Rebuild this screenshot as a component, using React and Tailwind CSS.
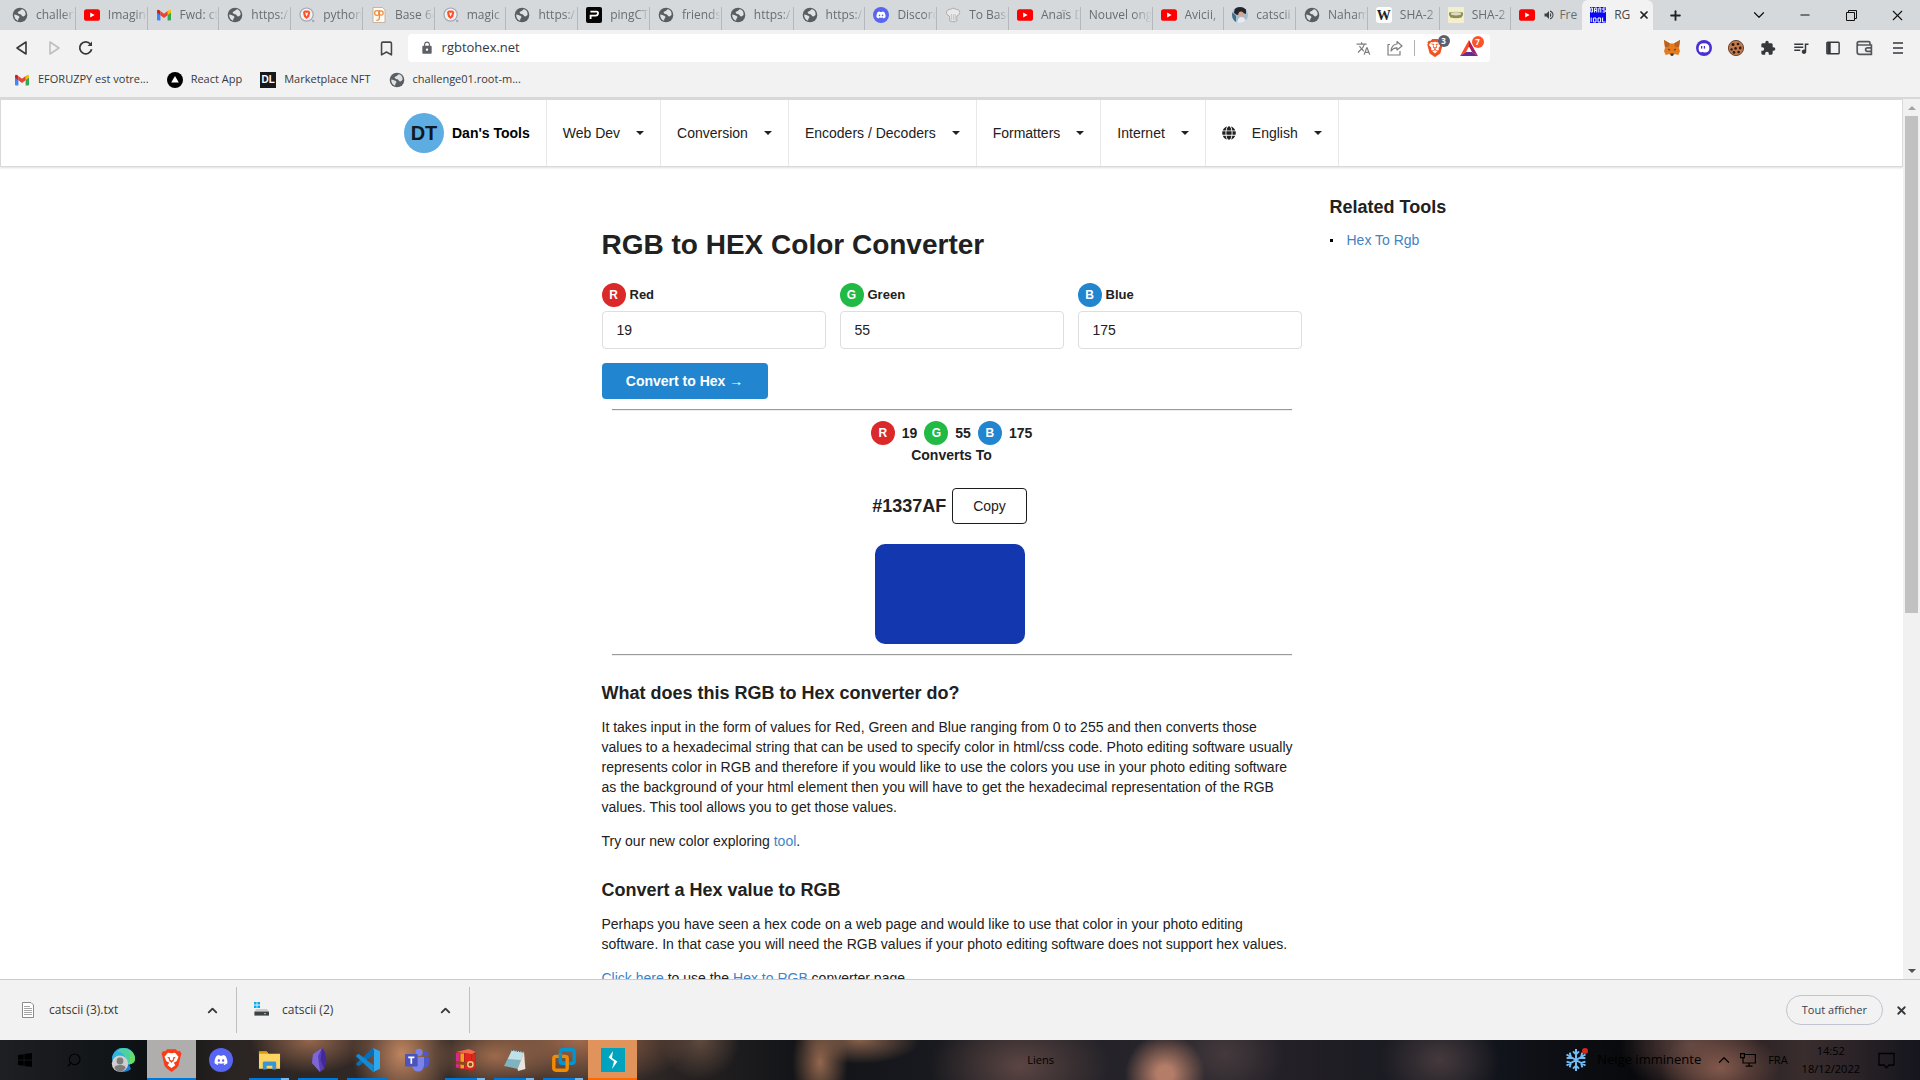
import React from "react";
import { FaDiscord, FaGlobe, FaWindows } from "react-icons/fa";
import { SiBrave } from "react-icons/si";
import { MdTranslate, MdExtension, MdLock, MdQueueMusic, MdVolumeUp } from "react-icons/md";
import { ChevronDown, ChevronUp, X, Plus, Minus, Bookmark, Search } from "lucide-react";

/* ---------- favicons ---------- */

function GlobeIcon() {
  return (
    <svg viewBox="0 0 16 16" className="size-4 shrink-0">
      <circle cx="8" cy="8" r="7.3" fill="#5a5e61" />
      <path d="M10.2 2.3 C8 3 8.6 4.2 6.6 4.6 C5 5 5.6 6.6 7 6.9 C9 7.2 9.4 7.6 10 8.8 C10.6 10 13 9.4 13.6 7.6 C13.8 5 12.4 3.2 10.2 2.3Z" fill="#dfe2e4" />
      <path d="M2.2 7.4 C4 7.4 5 8.2 6.4 8.8 C8 9.6 7.4 11 6.6 11.6 C6 12.2 6.4 13.2 6 13.7 C3.6 12.8 2 10.4 2.2 7.4Z" fill="#dfe2e4" />
    </svg>
  );
}

function YoutubeIcon() {
  return (
    <svg viewBox="0 0 16 16" className="size-4 shrink-0">
      <rect x="0" y="2.2" width="16" height="11.6" rx="2.6" fill="#f00" />
      <path d="M6.2 5.4 L10.6 8 L6.2 10.6Z" fill="#fff" />
    </svg>
  );
}

function GmailIcon() {
  return (
    <svg viewBox="0 0 16 16" className="size-4 shrink-0">
      <path d="M1 4 L4.4 6.4 V13.6 H2 A1 1 0 0 1 1 12.6Z" fill="#4285f4" />
      <path d="M15 4 L11.6 6.4 V13.6 H14 A1 1 0 0 0 15 12.6Z" fill="#34a853" />
      <path d="M11.6 4 L13 3 Q15 2.2 15 4.2 V5.6 L11.6 8.2Z" fill="#fbbc04" />
      <path d="M4.4 4 L3 3 Q1 2.2 1 4.2 V5.6 L4.4 8.2Z" fill="#c5221f" />
      <path d="M4.4 4 L8 6.7 L11.6 4 V8.2 L8 10.9 L4.4 8.2Z" fill="#ea4335" />
    </svg>
  );
}

function BraveSearchIcon() {
  return (
    <svg viewBox="0 0 16 16" className="size-4 shrink-0">
      <circle cx="7.6" cy="7.6" r="6.6" fill="#f1f1f3" stroke="#a3a6b4" strokeWidth="1.2" />
      <path d="M4.6 4.2 L5.8 3.4 H9.4 L10.6 4.2 L11.2 5.4 L10.2 9.8 L7.6 12 L5 9.8 L4 5.4Z" fill="#fb542b" />
      <path d="M6 5.4 L7.6 6 L9.2 5.4 L8.4 7.8 L7.6 9.4 L6.8 7.8Z" fill="#fff" />
      <circle cx="14.2" cy="14" r="1.2" fill="#a3a6b4" />
    </svg>
  );
}

function DcodeIcon() {
  return (
    <svg viewBox="0 0 16 16" className="size-4 shrink-0">
      <path d="M2 .5 H11.5 L14 3 V15.5 H2Z" fill="#fffaf2" stroke="#b9a894" strokeWidth=".8" />
      <circle cx="6" cy="6" r="2.4" fill="none" stroke="#f08a3c" strokeWidth="1.2" />
      <circle cx="10" cy="6" r="2.2" fill="none" stroke="#f08a3c" strokeWidth="1.2" />
      <path d="M8.4 3 V11 Q8 13.6 5.4 13.4" fill="none" stroke="#f08a3c" strokeWidth="1.3" />
    </svg>
  );
}

function PingIcon() {
  return (
    <svg viewBox="0 0 16 16" className="size-4 shrink-0">
      <rect width="16" height="16" rx="2" fill="#050505" />
      <path d="M4.4 4.6 H10.6 Q12.2 4.6 12 6.4 Q11.8 8.6 9.8 8.6 H4.6 V12" fill="none" stroke="#fff" strokeWidth="1.8" />
    </svg>
  );
}

function DiscordIcon() {
  return (
    <span className="flex size-4 shrink-0 items-center justify-center rounded-full bg-[#5865f2]">
      <FaDiscord className="size-[10px] text-white" />
    </span>
  );
}

function ChefIcon() {
  return (
    <svg viewBox="0 0 16 16" className="size-4 shrink-0">
      <path d="M4.4 9 Q1 8 1.4 5 Q2.4 2 5 2.4 Q8 0 11 2.2 Q14.6 2 14.8 5.4 Q14.6 8.4 11.8 9 V14 Q8 15.6 4.8 14Z" fill="#e9e9e9" stroke="#a9a9a9" strokeWidth=".9" />
      <path d="M6.4 7 V13 M8.4 7.4 V13.4 M10.2 7 V13" stroke="#b9b9b9" strokeWidth=".8" />
    </svg>
  );
}

function AvatarIcon() {
  return (
    <svg viewBox="0 0 16 16" className="size-4 shrink-0">
      <clipPath id="av"><circle cx="8" cy="8" r="8" /></clipPath>
      <g clipPath="url(#av)">
        <rect width="16" height="16" fill="#a9bccb" />
        <path d="M3 0 H14 V7 L11 6 L5 8 L2 6Z" fill="#23252c" />
        <circle cx="9" cy="7" r="2.6" fill="#d9a58e" />
        <path d="M5 16 Q6 9 10 10 Q14 11 14 16Z" fill="#e8eaee" />
        <path d="M0 5 L4 9 V16 H0Z" fill="#3f6d8c" />
      </g>
    </svg>
  );
}

function WikiIcon() {
  return (
    <span className="flex size-4 shrink-0 items-center justify-center rounded-[3px] bg-white font-['Liberation_Serif',serif] text-[14px] font-bold text-[#222]">
      W
    </span>
  );
}

function HashIcon() {
  return (
    <svg viewBox="0 0 16 16" className="size-4 shrink-0">
      <rect width="16" height="16" fill="#f6efcf" />
      <path d="M1 5.4 Q8 4 15 5.4 Q15.6 8 13.5 10.4 Q8 12 2.5 10.4 Q.4 8 1 5.4Z" fill="#8b8f4c" />
      <ellipse cx="8" cy="6.8" rx="5.2" ry="1.7" fill="#dcdcc0" />
    </svg>
  );
}

function DansIcon() {
  return (
    <svg viewBox="0 0 16 16" className="size-4 shrink-0">
      <rect width="16" height="16" fill="#0808f5" />
      <path d="M.8 1 H2.6 V5 H.8Z M4.6 5.5 V1 H6.8 V5.5 M4.6 3.4 H6.8 M8.8 5.5 V1 H10.8 V5.5 M15.6 1 H13 V3 H15.2 V5 H12.6" fill="none" stroke="#fff" strokeWidth="1" />
      <path d="M1.2 10.5 V15 M3.4 11 H6 V15 H3.4Z M8 11 H10.6 V15 H8Z M12.6 10.5 V15 H15.6" fill="none" stroke="#fff" strokeWidth="1" />
    </svg>
  );
}

const TABS = [
  ["challer", GlobeIcon],
  ["Imagine", YoutubeIcon],
  ["Fwd: ct", GmailIcon],
  ["https:/", GlobeIcon],
  ["python", BraveSearchIcon],
  ["Base 64", DcodeIcon],
  ["magic", BraveSearchIcon],
  ["https:/", GlobeIcon],
  ["pingCT", PingIcon],
  ["friends", GlobeIcon],
  ["https:/", GlobeIcon],
  ["https:/", GlobeIcon],
  ["Discord", DiscordIcon],
  ["To Base", ChefIcon],
  ["Anaïs D", YoutubeIcon],
  ["Nouvel ong", null],
  ["Avicii,", YoutubeIcon],
  ["catscii", AvatarIcon],
  ["Naham", GlobeIcon],
  ["SHA-2", WikiIcon],
  ["SHA-2", HashIcon],
];

function TabStrip() {
  return (
    <div className="flex h-[30px] shrink-0 items-end bg-[#d5d9dc] text-[12px] text-[#6a6d70]">
      <div className="flex h-full w-[86.1%] items-end pl-1" role="tablist">
        {TABS.map(([label, Icon], i) => (
          <button key={i} role="tab" aria-selected="false" className="flex h-[23px] min-w-0 flex-1 items-center gap-2 overflow-hidden border-r border-[#b4b8bb] pb-[7px] pl-2">
            {Icon && <Icon />}
            <span className="min-w-0 flex-1 overflow-hidden text-left whitespace-nowrap [mask-image:linear-gradient(to_right,black_70%,transparent)]">{label}</span>
          </button>
        ))}
        <button role="tab" aria-selected="false" className="flex h-[23px] min-w-0 flex-1 items-center gap-2 overflow-hidden pb-[7px] pl-2">
          <YoutubeIcon />
          <MdVolumeUp className="size-3 shrink-0 text-[#3f4245]" />
          <span className="-ml-1 whitespace-nowrap">Fre</span>
        </button>
        <button role="tab" aria-selected="true" className="flex h-full min-w-0 flex-1 items-center gap-2 rounded-t-md bg-[#f2f2f2] pl-2 text-[#45484b]">
          <DansIcon />
          <span>RG</span>
          <X className="size-3 shrink-0 text-[#222]" strokeWidth={3.4} />
        </button>
      </div>
      <button aria-label="Nouvel onglet" className="flex h-full w-11 items-center justify-center text-[#222]">
        <Plus className="size-[15px]" strokeWidth={3} />
      </button>
      <div className="ml-auto flex h-full text-[#111]">
        <button aria-label="Rechercher des onglets" className="flex w-[46px] items-center justify-center"><ChevronDown className="size-[18px]" strokeWidth={1.6} /></button>
        <button aria-label="Réduire" className="flex w-[46px] items-center justify-center"><Minus className="size-[14px]" strokeWidth={2} /></button>
        <button aria-label="Restaurer" className="flex w-[46px] items-center justify-center">
          <svg viewBox="0 0 11 11" className="size-[11px]" fill="none" stroke="#111"><path d="M.5 2.5 H8.5 V10.5 H.5Z M2.5 2.5 V.5 H10.5 V8.5 H8.5" /></svg>
        </button>
        <button aria-label="Fermer" className="flex w-[46px] items-center justify-center"><X className="size-[17px]" strokeWidth={1.5} /></button>
      </div>
    </div>
  );
}

function Toolbar() {
  return (
    <div className="flex h-9 shrink-0 items-center bg-[#f2f2f2] text-[#3b3e4f]">
      <button aria-label="Précédent" className="flex w-8 justify-center pl-3">
        <svg viewBox="0 0 14 16" className="h-4 w-[14px]" fill="none" stroke="#36393c" strokeWidth="1.6" strokeLinejoin="round"><path d="M11 2 V14 L2 8Z" /></svg>
      </button>
      <button aria-label="Suivant" className="flex w-11 justify-center">
        <svg viewBox="0 0 14 16" className="h-4 w-[14px]" fill="none" stroke="#bcbec0" strokeWidth="1.6" strokeLinejoin="round"><path d="M3 2 V14 L12 8Z" /></svg>
      </button>
      <button aria-label="Actualiser" className="flex w-5 justify-center">
        <svg viewBox="0 0 16 16" className="size-4" fill="none" stroke="#36393c" strokeWidth="1.8"><path d="M13.6 9.2 A6 6 0 1 1 12.4 4" /><path d="M14 1.4 V6 H9.6Z" fill="#36393c" stroke="none" /></svg>
      </button>
      <div className="flex flex-[298] justify-end">
        <button aria-label="Ajouter aux favoris"><Bookmark className="size-[17px] text-[#45484b]" strokeWidth={2.2} /></button>
      </div>
      <div className="ml-[13px] flex h-7 flex-[1056] items-center rounded bg-white px-3">
        <MdLock className="size-[14px] text-[#5d6064]" />
        <input aria-label="Adresse" defaultValue="rgbtohex.net" className="ml-2 min-w-0 flex-1 bg-transparent text-[13px] text-[#36393c] outline-none" />
        <MdTranslate className="size-[15px] text-[#7b7e81]" />
        <svg viewBox="0 0 16 16" className="ml-4 size-4" fill="none" stroke="#7b7e81" strokeWidth="1.2" strokeLinejoin="round"><path d="M3 4.5 H1 V15 H13 V11" /><path d="M10 1.5 L15 6 L10 10 V7.8 Q6 7.6 4 11 Q4.6 4.6 10 4Z" /></svg>
        <span className="mx-[11px] h-4 w-px bg-[#aeb1b4]" />
        <button aria-label="Brave Shields" className="relative flex">
          <SiBrave className="size-[18px] text-[#f4511e]" />
          <span className="absolute -top-1 left-3 flex size-3 items-center justify-center rounded-full bg-[#5c5f70] text-[8px] leading-none font-bold text-white">3</span>
        </button>
        <button aria-label="Brave Rewards" className="relative ml-4 flex">
          <svg viewBox="0 0 18 16" className="h-4 w-[18px]"><path d="M9 0 L0 16 L6 12 L9 6.6Z" fill="#ff4724" /><path d="M0 16 H18 L12 12 H6Z" fill="#662d91" /><path d="M9 0 L18 16 L12 12 L9 6.6Z" fill="#9e1f63" /></svg>
          <span className="absolute -top-1 left-3 flex size-3 items-center justify-center rounded-full bg-[#fb542b] text-[8px] leading-none font-bold text-white">7</span>
        </button>
      </div>
      <div className="flex-[174]" />
      <div className="flex shrink-0 items-center gap-4 pr-[17px]">
        <svg viewBox="0 0 16 16" className="size-4"><path d="M0 0 L6 3.6 H10 L16 0 L15 8 L16 11 L14.4 15 L10.6 14 L9 16 H7 L5.4 14 L1.6 15 L0 11 L1 8Z" fill="#e67a1f" /><path d="M0 0 L6 3.6 L4.6 7 L1 7Z M16 0 L10 3.6 L11.4 7 L15 7Z" fill="#b9621f" /><path d="M4 8.6 L6.6 10 L4.8 10.6Z M12 8.6 L9.4 10 L11.2 10.6Z M6.4 13.4 H9.6 L9 15.6 H7Z" fill="#23303c" /></svg>
        <svg viewBox="0 0 16 16" className="size-4"><circle cx="8" cy="8" r="8" fill="#4b2fd4" /><path d="M2.6 8.6 Q2.6 3.2 8 3.2 Q13.4 3.2 13.4 8 Q13.4 12.6 8.6 12.6 Q7 12.6 6.6 11.8 Q5.4 12.8 4 12 Q2.6 11 2.6 8.6Z" fill="#fff" /><rect x="5" y="6" width="1.3" height="2.6" fill="#4b2fd4" /><rect x="7.8" y="6" width="1.3" height="2.6" fill="#4b2fd4" /></svg>
        <svg viewBox="0 0 16 16" className="size-4"><circle cx="8" cy="8" r="7.6" fill="#c07a4e" stroke="#4a2c1c" strokeWidth=".8" /><g fill="#2c1a12"><circle cx="5" cy="4.6" r="1.5" /><circle cx="10" cy="4" r="1.3" /><circle cx="12.2" cy="8" r="1.4" /><circle cx="7.6" cy="8.4" r="1.3" /><circle cx="3.6" cy="9.4" r="1.2" /><circle cx="6" cy="12.4" r="1.3" /><circle cx="10.6" cy="12" r="1.3" /></g></svg>
        <MdExtension className="size-4 text-[#36393c]" />
        <MdQueueMusic className="size-[18px] text-[#36393c]" />
        <svg viewBox="0 0 16 16" className="size-[14px]" fill="none" stroke="#36393c" strokeWidth="1.6"><rect x="1" y="1.4" width="14" height="13.2" rx="1" /><path d="M3.4 2 V14" strokeWidth="4" /></svg>
        <svg viewBox="0 0 17 16" className="h-4 w-[17px]" fill="none" stroke="#55585b" strokeWidth="1.7"><path d="M14 5 V3 Q14 1.6 12.6 1.6 H3 Q1.2 1.6 1.2 3.4 V12 Q1.2 14.4 3.6 14.4 H15.4 V5 H3 Q1.6 5 1.4 4" /><path d="M16 7.8 H11.4 Q9.6 7.8 9.6 9.6 Q9.6 11.4 11.4 11.4 H16" /></svg>
        <svg viewBox="0 0 10 12" className="ml-1 h-3 w-[10px]" stroke="#36393c" strokeWidth="1.6"><path d="M0 1 H10 M0 6 H10 M0 11 H10" /></svg>
      </div>
    </div>
  );
}

function BookmarksBar() {
  return (
    <nav aria-label="Favoris" className="flex h-[33px] shrink-0 items-center gap-[18px] border-b-2 border-[#d8d8d8] bg-[#f2f2f2] pb-1 pl-[14px] text-[11px] text-[#36393c]">
      <a href="#" className="flex items-center gap-2"><GmailIcon />EFORUZPY est votre...</a>
      <a href="#" className="flex items-center gap-2">
        <svg viewBox="0 0 16 16" className="size-4"><circle cx="8" cy="8" r="8" fill="#000" /><path d="M8 4 L11.8 10.6 H4.2Z" fill="#fff" /></svg>
        React App
      </a>
      <a href="#" className="flex items-center gap-2">
        <span className="flex size-4 items-center justify-center bg-[#17181b] font-['Liberation_Sans',sans-serif] text-[10px] font-bold text-white">DL</span>
        Marketplace NFT
      </a>
      <a href="#" className="flex items-center gap-2"><GlobeIcon />challenge01.root-m...</a>
    </nav>
  );
}

/* ---------- web page ---------- */

function Caret() {
  return <svg viewBox="0 0 8 4" className="ml-4 h-1 w-2"><path d="M0 0 H8 L4 4Z" fill="#222" /></svg>;
}

function NavItem({ label, icon }) {
  return (
    <button className="flex items-center border-r border-[#e8e8e9] px-4">
      {icon}
      {label}
      <Caret />
    </button>
  );
}

function SiteHeader() {
  return (
    <header className="border border-[#d8d9d9] bg-white shadow-[0_1px_2px_0_rgba(34,36,38,0.15)]">
      <div className="mx-auto flex h-[66px] max-w-[1127px]">
        <a href="#" className="flex items-center gap-2 border-r border-[#e8e8e9] px-4 font-bold text-black">
          <span className="flex size-10 items-center justify-center rounded-full bg-[#5dade2] text-[20px] text-[#0f1a22]">DT</span>
          Dan's Tools
        </a>
        <NavItem label="Web Dev" />
        <NavItem label="Conversion" />
        <NavItem label="Encoders / Decoders" />
        <NavItem label="Formatters" />
        <NavItem label="Internet" />
        <NavItem label="English" icon={<FaGlobe className="mr-4 size-[14px]" />} />
      </div>
    </header>
  );
}

const BADGE = "inline-flex size-6 shrink-0 items-center justify-center rounded-full text-[12px] font-bold text-white";

function Badge({ letter }) {
  if (letter === "R") return <span className={BADGE + " bg-[#db2828]"}>R</span>;
  if (letter === "G") return <span className={BADGE + " bg-[#21ba45]"}>G</span>;
  return <span className={BADGE + " bg-[#2185d0]"}>B</span>;
}

function Field({ letter, name, value }) {
  return (
    <div className="min-w-0">
      <label htmlFor={name} className="flex items-center gap-1 text-[13px] font-bold">
        <Badge letter={letter} />
        {name}
      </label>
      <input id={name} defaultValue={value} className="mt-1 h-[38px] w-full rounded border border-[#dedede] px-[14px] outline-none" />
    </div>
  );
}

function Rule() {
  return <hr className="mx-[10px] border-t border-b border-t-[#9a9a9a] border-b-[#eeeeee]" />;
}

function Page() {
  return (
    <div className="min-w-0 flex-1 overflow-hidden bg-white font-['Liberation_Sans',Arial,sans-serif] text-[14px] leading-5 text-[#212121]">
      <SiteHeader />
      <div className="grid grid-cols-[1fr_minmax(0,700px)_1fr] gap-7">
        <main className="col-start-2 pt-[60px]">
          <h1 className="text-[28px] leading-9 font-bold">RGB to HEX Color Converter</h1>
          <form className="mt-5" onSubmit={(e) => e.preventDefault()}>
            <div className="grid grid-cols-3 gap-[14px]">
              <Field letter="R" name="Red" value="19" />
              <Field letter="G" name="Green" value="55" />
              <Field letter="B" name="Blue" value="175" />
            </div>
            <button className="mt-[14px] h-9 min-w-[166px] rounded bg-[#2185d0] px-5 font-bold text-white">Convert to Hex →</button>
          </form>
          <div className="mt-[10px]"><Rule /></div>
          <div className="mt-[10px] flex items-center justify-center gap-[7px] font-bold">
            <Badge letter="R" />19
            <Badge letter="G" />55
            <Badge letter="B" />175
          </div>
          <p className="text-center font-bold">Converts To</p>
          <div className="mt-[23px] flex items-center justify-center gap-[6px] pr-1">
            <strong className="text-[18px]">#1337AF</strong>
            <button className="h-9 rounded border border-[#1b1c1d] px-5">Copy</button>
          </div>
          <div className="mt-5 flex justify-center pr-1">
            <div className="h-[100px] w-[150px] rounded-[10px] bg-[#1337af]" />
          </div>
          <div className="mt-[10px]"><Rule /></div>
          <h2 className="mt-[25px] text-[18px] leading-6 font-bold">What does this RGB to Hex converter do?</h2>
          <p className="mt-3 pr-[5px]">
            It takes input in the form of values for Red, Green and Blue ranging from 0 to 255 and then converts those values to a hexadecimal string that can be used to specify color in html/css code. Photo editing software usually represents color in RGB and therefore if you would like to use the colors you use in your photo editing software as the background of your html element then you will have to get the hexadecimal representation of the RGB values. This tool allows you to get those values.
          </p>
          <p className="mt-[14px]">
            Try our new color exploring <a href="#" className="text-[#4183c4]">tool</a>.
          </p>
          <h2 className="mt-[27px] text-[18px] leading-6 font-bold">Convert a Hex value to RGB</h2>
          <p className="mt-3">
            Perhaps you have seen a hex code on a web page and would like to use that color in your photo editing software. In that case you will need the RGB values if your photo editing software does not support hex values.
          </p>
          <p className="mt-[14px] whitespace-nowrap">
            <a href="#" className="text-[#4183c4]">Click here</a> to use the <a href="#" className="text-[#4183c4]">Hex to RGB</a> converter page.
          </p>
        </main>
        <aside className="pt-7">
          <h2 className="text-[18px] leading-6 font-bold">Related Tools</h2>
          <ul className="mt-[11px]">
            <li className="flex items-center gap-[14px]">
              <span className="size-[3px] bg-black" />
              <a href="#" className="text-[#4183c4]">Hex To Rgb</a>
            </li>
          </ul>
        </aside>
      </div>
    </div>
  );
}

function Scrollbar() {
  return (
    <div aria-hidden="true" className="flex w-[17px] shrink-0 flex-col items-center bg-[#f1f1f1]">
      <div className="flex h-[17px] shrink-0 items-center"><svg viewBox="0 0 8 4" className="h-1 w-2"><path d="M0 4 H8 L4 0Z" fill="#a3a3a3" /></svg></div>
      <div className="flex min-h-0 w-full flex-1 flex-col px-0.5"><div className="h-[58.7%] bg-[#c1c1c1]" /></div>
      <div className="flex h-[17px] shrink-0 items-center"><svg viewBox="0 0 8 4" className="h-1 w-2"><path d="M0 0 H8 L4 4Z" fill="#505050" /></svg></div>
    </div>
  );
}

/* ---------- downloads ---------- */

function Download({ name, children }) {
  return (
    <div className="my-[7px] flex w-[233px] items-center border-r border-[#bfbfbf] pr-4 pl-4">
      {children}
      <button className="ml-[13px] flex-1 text-left">{name}</button>
      <button aria-label={"Options " + name}><ChevronUp className="size-[15px]" strokeWidth={3} /></button>
    </div>
  );
}

function Downloads() {
  return (
    <div className="flex h-[61px] shrink-0 border-t border-[#c9cacb] bg-[#f2f2f2] text-[12px] text-[#36393c]">
      <div className="flex h-full pl-1">
        <Download name="catscii (3).txt">
          <svg viewBox="0 0 16 16" className="size-4"><path d="M2.5 .5 H11 L13.5 3 V15.5 H2.5Z" fill="#fff" stroke="#8b8b8b" /><path d="M4 4.5 H10 M4 6.5 H12 M4 8.5 H12 M4 10.5 H12 M4 12.5 H12" stroke="#9a9a9a" strokeWidth=".9" /></svg>
        </Download>
        <Download name="catscii (2)">
          <svg viewBox="0 0 16 16" className="size-4"><path d="M1 0 H3.6 V2.6 H1Z M4.4 0 H7 V2.6 H4.4Z M1 3.4 H3.6 V6 H1Z M4.4 3.4 H7 V6 H4.4Z" fill="#00adef" /><path d="M3 7 H14 L16 10 H1.4Z" fill="#c9cbcd" /><rect x="1.4" y="9.6" width="14.6" height="4" fill="#3f4346" /><rect x="11" y="11" width="2" height="1.2" fill="#4be04b" /></svg>
        </Download>
      </div>
      <div className="ml-auto flex items-center pr-3">
        <button className="h-[30px] rounded-full border border-[#c2c4cf] px-[15px] text-[11px] text-[#3b3e4f]">Tout afficher</button>
        <button aria-label="Fermer" className="ml-3"><X className="size-[13px]" strokeWidth={3.4} /></button>
      </div>
    </div>
  );
}

/* ---------- Windows taskbar ---------- */

function TaskButton({ label, running, active, children }) {
  const tone = active === "grey" ? "bg-[#b0adad]" : active === "orange" ? "bg-[#e0935a]" : "";
  return (
    <button aria-label={label} className={"relative flex w-[49px] items-center justify-center " + tone}>
      {children}
      {running === "one" && <span className="absolute bottom-0 left-1 h-[2px] w-10 bg-[#0078d7]" />}
      {running === "many" && (
        <span className="absolute bottom-0 left-1 flex h-[2px] w-10"><span className="flex-1 bg-[#0078d7]" /><span className="w-2 bg-[#76b9ed]" /></span>
      )}
      {active === "grey" && <span className="absolute inset-x-0 bottom-0 h-[2px] bg-[#0078d7]" />}
      {active === "orange" && <span className="absolute inset-x-0 bottom-0 h-[2px] bg-[#ff6a00]" />}
    </button>
  );
}

function Taskbar() {
  return (
    <footer className="flex h-10 shrink-0 overflow-hidden bg-[#1d1b20] bg-[radial-gradient(ellipse_60px_34px_at_495px_16px,#9c6a4c,transparent),radial-gradient(ellipse_50px_60px_at_402px_14px,#c08560,transparent),radial-gradient(ellipse_60px_34px_at_310px_0px,#94664c,transparent),radial-gradient(ellipse_110px_50px_at_580px_0px,#a0694b,transparent),radial-gradient(ellipse_28px_50px_at_820px_22px,#93674e,transparent),radial-gradient(ellipse_60px_24px_at_860px_0px,#85604a,transparent),radial-gradient(ellipse_40px_40px_at_700px_0px,#604a3e,transparent),radial-gradient(ellipse_90px_60px_at_1020px_26px,#5b4543,transparent),radial-gradient(ellipse_40px_40px_at_1165px_34px,#b47d68_20%,transparent),radial-gradient(ellipse_60px_50px_at_1225px_14px,#453a3d,transparent),radial-gradient(ellipse_60px_50px_at_1440px_20px,#453a3d,transparent),radial-gradient(ellipse_60px_40px_at_1720px_28px,#82584b,transparent),radial-gradient(ellipse_70px_50px_at_1690px_4px,#5d443f,transparent),linear-gradient(90deg,#1d1f22,#0d1013_8%,#2a2422_12%,#3a2f2b_30%,#101317_42%,#27252b_60%,#221f26_68%,#14171f_76%,#08090c_85%,#3a2d2e_94%,#15151d)] text-[11px] text-black">
      <TaskButton label="Démarrer"><FaWindows className="size-4" /></TaskButton>
      <TaskButton label="Rechercher"><Search className="size-4 -scale-x-100" strokeWidth={1.8} /></TaskButton>
      <TaskButton label="Edge">
        <svg viewBox="0 0 24 24" className="size-6">
          <path d="M1 12 A11.4 11.4 0 0 1 24 10 Q24 16 18 16.4 L20 21 Q15 25.4 9 23.4Z" fill="#1a7fd0" />
          <path d="M1 11 A11.5 11.5 0 0 1 14 .2 L17 12 Q10 4 1 11Z" fill="#2fb4dc" />
          <path d="M10 .4 A11.5 11.5 0 0 1 24 10 Q24 16 18 16.4 Q15 16 16 12.6 Q14 5 6 3Z" fill="#4fd0a0" />
          <path d="M18 2 A11.5 11.5 0 0 1 24 10 Q24 16 18 16.4 Q20 9 18 2Z" fill="#66de6c" />
          <circle cx="9" cy="15.6" r="8.2" fill="#cfcfcf" /><circle cx="9" cy="13" r="3.4" fill="#7c7c7c" />
          <path d="M3.4 20 Q3.6 17 9 17 Q14.4 17 14.6 20 Q12 23.8 9 23.8 Q6 23.8 3.4 20Z" fill="#7c7c7c" />
        </svg>
      </TaskButton>
      <TaskButton label="Brave" active="grey">
        <svg viewBox="0 0 24 26" className="h-[25px] w-[21px]"><path d="M7 0 H17 L19 2.4 L21.4 2.2 L23.4 5 L22.6 7.6 L20 19 Q19 21 17 22.4 L12 26 L7 22.4 Q5 21 4 19 L1.4 7.6 L.6 5 L2.6 2.2 L5 2.4Z" fill="#f93d16" /><path d="M12 4.6 L16 4 L20 8.6 L18 13.6 L14.6 15.6 L16.4 18.4 L12 21.6 L7.6 18.4 L9.4 15.6 L6 13.6 L4 8.6 L8 4Z" fill="#fff" /><path d="M7 8.6 L10.4 9.6 L10 12 H14 L13.6 9.6 L17 8.6 L15.2 11 L14.4 13.8 L12.6 14.6 L12 16 L11.4 14.6 L9.6 13.8 L8.8 11Z" fill="#f93d16" /><path d="M10.8 9 H13.2 L12.8 13 H11.2Z" fill="#fff" /></svg>
      </TaskButton>
      <TaskButton label="Discord"><span className="flex size-6 items-center justify-center rounded-full bg-[#5865f2]"><FaDiscord className="size-[14px] text-white" /></span></TaskButton>
      <TaskButton label="Explorateur" running="many">
        <svg viewBox="0 0 24 20" className="h-5 w-[23px]"><path d="M1 1 H9 L11 3.4 H23 V19 H1Z" fill="#fcd462" /><path d="M1 1 H9 L11 3.4 H1Z" fill="#e09a12" /><path d="M5 20 V13 Q5 11.6 6.4 11.6 H17.6 Q19 11.6 19 13 V20 H15 V16 H9 V20Z" fill="#3a95d8" /></svg>
      </TaskButton>
      <TaskButton label="Obsidian" running="one">
        <svg viewBox="0 0 16 24" className="h-6 w-4"><path d="M11 0 L2 6 L1 15 L9 24 L13 21 L15.4 12 L14 4Z" fill="#5a3fb4" /><path d="M11 0 L7 8 L9 24 L1 15 L2 6Z" fill="#7d67d6" /><path d="M11 0 L14 4 L15.4 12 L13 21 L9.6 12Z" fill="#42299b" /></svg>
      </TaskButton>
      <TaskButton label="Visual Studio Code" running="one">
        <svg viewBox="0 0 24 24" className="size-6"><path d="M17 0 L18 6.6 L2.6 18.2 L.2 16.6 V15.4Z" fill="#0a6fb8" /><path d="M17 24 L18 17.4 L2.6 5.8 L.2 7.4 V8.6Z" fill="#1489d4" /><path d="M17 0 L24 3.2 V20.8 L17 24 Q18.4 22 18 20 V4 Q18.4 2 17 0Z" fill="#2fa8f0" /></svg>
      </TaskButton>
      <TaskButton label="Teams">
        <svg viewBox="0 0 24 24" className="size-6"><circle cx="21" cy="5.6" r="2.6" fill="#5059c9" /><path d="M17 9 H24 V15 Q24 19 20.6 19 H17Z" fill="#5059c9" /><circle cx="14" cy="4.4" r="3.6" fill="#7b83eb" /><path d="M7 9 H19 V17 Q18 24 12.6 23.6 Q7 23 7 16Z" fill="#7b83eb" /><rect x="0" y="6" width="12.6" height="12.6" rx="1" fill="#4b53bc" /><path d="M3.2 9.4 H9.4 M6.3 9.4 V15.8" stroke="#fff" strokeWidth="1.7" /></svg>
      </TaskButton>
      <TaskButton label="WinRAR" running="many">
        <svg viewBox="0 0 22 22" className="size-[22px]"><path d="M1 3 L14 0 L21 3 V18 L18 22 L1 19Z" fill="#b3202a" /><path d="M1 4 H4.6 V18.6 H1Z" fill="#d42a8c" /><path d="M5.4 4.4 H9 V19.4 H5.4Z" fill="#f0a020" /><path d="M9.8 5 H16.4 V21 L9.8 20Z" fill="#e3261c" /><path d="M1 3 L14 0 L21 3 L17 5Z" fill="#f06a4c" /><path d="M1 12 L17 14 V17 L1 15Z" fill="#8c4a1c" /><path d="M17 5 H20.6 V18 L17 21Z" fill="#cf2d20" /><circle cx="15.4" cy="15.4" r="2.6" fill="none" stroke="#f1d08a" strokeWidth="1.4" /></svg>
      </TaskButton>
      <TaskButton label="Bloc-notes" running="many">
        <svg viewBox="0 0 22 24" className="h-6 w-[22px]"><path d="M8 2 L20 4 L14 21 L0 18Z" fill="#7fb3c0" /><path d="M8 2 L20 4 L17 12 L4 11Z" fill="#bfe0e6" /><path d="M20 4 L21.4 21 L14 23 L13.6 21Z" fill="#e8e4dc" /><path d="M8 2 L20 4" stroke="#5d6467" strokeWidth="1.8" strokeDasharray="1.4 1" /></svg>
      </TaskButton>
      <TaskButton label="VMware" running="many">
        <svg viewBox="0 0 24 24" className="size-6" fill="none" strokeWidth="3.4"><rect x="8.4" y="1.8" width="13.8" height="13.4" rx="2" stroke="#0095d3" /><rect x="1.8" y="8.4" width="13.4" height="13.8" rx="2" stroke="#f38b00" /><path d="M8.4 7 V13.2 Q8.4 15.2 10.4 15.2 H13" stroke="#0095d3" /></svg>
      </TaskButton>
      <TaskButton label="Burp Suite" active="orange">
        <svg viewBox="0 0 24 24" className="size-6"><rect width="24" height="24" fill="#00a3bd" /><path d="M12 3 L7.6 9.6 L13 13.4 L11 21 L16.4 13.6 L11 10Z" fill="#fff" /></svg>
      </TaskButton>
      <div className="flex flex-[416] items-center justify-end">Liens</div>
      <div className="flex-[510]" />
      <div className="flex shrink-0 items-center pr-[25px]">
        <button className="flex items-center gap-[10px] text-[14px]">
          <span className="relative">
            <svg viewBox="0 0 22 22" className="size-[22px]" fill="none" stroke="#72bdf5" strokeWidth="2"><path d="M11 0 V22 M1.5 5.5 L20.5 16.5 M1.5 16.5 L20.5 5.5 M8 2.4 L11 5.4 L14 2.4 M8 19.6 L11 16.6 L14 19.6 M1.6 9.4 L5.8 8 L4.8 3.6 M20.4 9.4 L16.2 8 L17.2 3.6 M1.6 12.6 L5.8 14 L4.8 18.4 M20.4 12.6 L16.2 14 L17.2 18.4" /></svg>
            <span className="absolute -top-[1px] left-[17px] size-[6px] rounded-full bg-[#d3281c]" />
          </span>
          <span className="text-[13px]">Neige imminente</span>
        </button>
        <ChevronUp className="ml-[14px] size-[18px]" strokeWidth={1.6} />
        <svg viewBox="0 0 16 14" className="ml-[7px] h-[14px] w-4" fill="none" stroke="#000" strokeWidth="1.2"><path d="M5 1.5 H15.4 V10 H3 V5 M.6 .6 H4.4 V4.6 H.6Z M9 10 V13 M5.6 13.2 H12.6" /></svg>
        <span className="ml-3">FRA</span>
        <div className="ml-[14px] text-center leading-[18px]">
          <div>14:52</div>
          <div>18/12/2022</div>
        </div>
        <svg viewBox="0 0 17 17" className="ml-[18px] size-[17px]" fill="none" stroke="#000" strokeWidth="1.3"><path d="M1 1.5 H16 V13 H11 L8.5 15.8 L6 13 H1Z" /></svg>
      </div>
    </footer>
  );
}

export default function App() {
  return (
    <div className="flex h-screen flex-col overflow-hidden font-['Open_Sans','Noto_Sans',sans-serif]">
      <TabStrip />
      <Toolbar />
      <BookmarksBar />
      <div className="flex min-h-0 flex-1">
        <Page />
        <Scrollbar />
      </div>
      <Downloads />
      <Taskbar />
    </div>
  );
}
